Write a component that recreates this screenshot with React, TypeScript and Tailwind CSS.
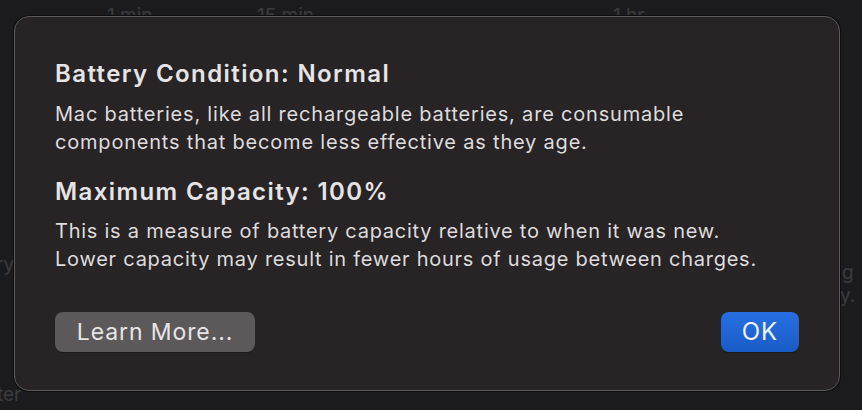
import React from 'react';

const font = { fontFamily: 'Inter, "Noto Sans", sans-serif' };

function BackdropText() {
  // faint content of the settings window behind the sheet
  return (
    <div className="absolute inset-0 text-[#3b3b3d] text-[19px] leading-[22px]" style={font}>
      <div className="flex pt-[5px] pl-[107px]">
        <span className="w-[150px]">1 min</span>
        <span className="w-[356px]">15 min</span>
        <span>1 hr</span>
      </div>
      <div className="absolute left-[-4px] top-[254px]">ry</div>
      <div className="absolute left-[-3px] top-[384px]">ter</div>
      <div className="absolute left-[842px] top-[262px]">g</div>
      <div className="absolute left-[840px] top-[285px]">y.</div>
    </div>
  );
}

export default function App() {
  return (
    <div className="relative w-[862px] h-[410px] bg-[#1b1b1d] overflow-hidden" style={font}>
      <BackdropText />
      <div className="absolute left-[14px] top-[16px] w-[826px] h-[375px] rounded-[15px] bg-[#282325] border border-[#5d595b] shadow-[0_0_0_1px_#0e0e0f] px-[40px] pt-[43px] pb-[38px] flex flex-col text-[#e6e4e5]">
        <h1 className="text-[24px] font-semibold leading-[28px] tracking-[1.4px]">Battery Condition: Normal</h1>
        <p className="text-[20px] leading-[28px] mt-[12px] tracking-[0.8px] text-[#dedcdd]">
          Mac batteries, like all rechargeable batteries, are consumable
          <br />
          components that become less effective as they age.
        </p>
        <h1 className="text-[24px] font-semibold leading-[28px] mt-[22px] tracking-[1.4px]">Maximum Capacity: 100%</h1>
        <p className="text-[20px] leading-[28px] mt-[11px] tracking-[0.75px] text-[#dedcdd]">
          This is a measure of battery capacity relative to when it was new.
          <br />
          Lower capacity may result in fewer hours of usage between charges.
        </p>
        <div className="mt-auto flex items-center justify-between">
          <button className="w-[200px] h-[40px] rounded-[8px] bg-[#5d5859] text-[23px] tracking-[0.9px] text-[#e8e6e7] shadow-[0_1px_0_rgba(0,0,0,0.25)]">
            Learn More...
          </button>
          <button className="w-[78px] h-[40px] rounded-[8px] bg-gradient-to-b from-[#2770e2] to-[#1a5cc6] text-[24px] tracking-[1px] text-[#eef2fb] shadow-[0_1px_0_rgba(0,0,0,0.3)]">
            OK
          </button>
        </div>
      </div>
    </div>
  );
}
